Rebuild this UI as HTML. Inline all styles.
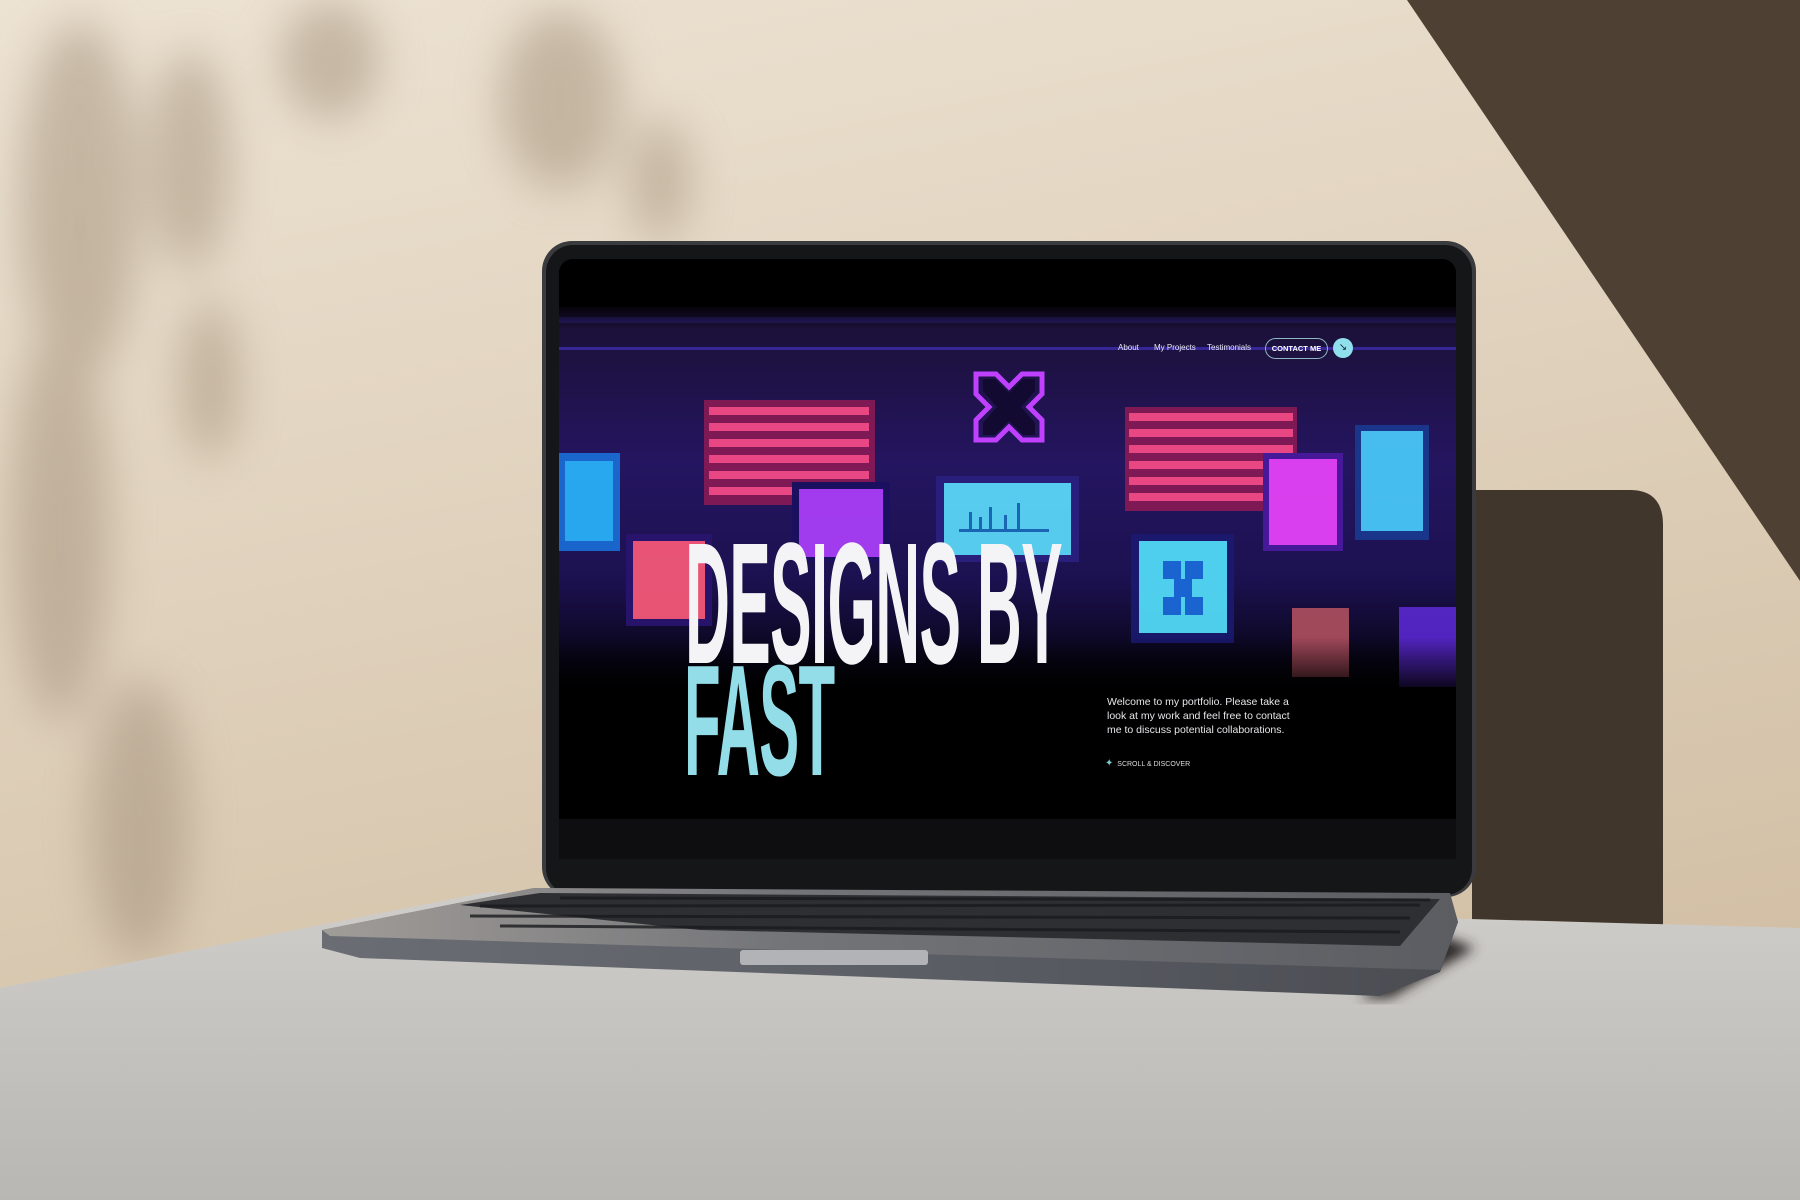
<!DOCTYPE html>
<html><head><meta charset="utf-8"><style>
*{margin:0;padding:0;box-sizing:border-box}
body{width:1800px;height:1200px;overflow:hidden;position:relative;background:#e4d6c2;font-family:"Liberation Sans",sans-serif}
.abs{position:absolute}
.scr{position:absolute;left:559px;top:259px;width:897px;height:600px;background:#000;border-radius:14px 14px 0 0;overflow:hidden}
.nav{position:absolute;top:84px;font-size:8px;color:#e8e8f0}
.big{position:absolute;font-weight:bold;line-height:1;transform-origin:0 0;white-space:nowrap;letter-spacing:-2px}
</style></head><body>
<svg class="abs" style="left:0;top:0" width="1800" height="1200">
<defs>
<linearGradient id="wall" x1="0" y1="0" x2="0.3" y2="1"><stop offset="0" stop-color="#ede3d3"/><stop offset="1" stop-color="#d2bfa5"/></linearGradient>
<linearGradient id="tab" x1="0" y1="0" x2="0" y2="1"><stop offset="0" stop-color="#cfcdc9"/><stop offset="1" stop-color="#b9b7b3"/></linearGradient>
<linearGradient id="front" x1="0" y1="0" x2="1" y2="0"><stop offset="0" stop-color="#6a6d74"/><stop offset="0.5" stop-color="#5c5f66"/><stop offset="1" stop-color="#4a4c52"/></linearGradient>
<linearGradient id="top" x1="0" y1="0" x2="1" y2="0"><stop offset="0" stop-color="#a09c98"/><stop offset="0.4" stop-color="#747579"/><stop offset="1" stop-color="#5b5d62"/></linearGradient>
<filter id="bl"><feGaussianBlur stdDeviation="22"/></filter>
<filter id="bl2"><feGaussianBlur stdDeviation="6"/></filter>
</defs>
<rect width="1800" height="1200" fill="url(#wall)"/>
<g filter="url(#bl)" fill="#a08e78" opacity="0.5">
<ellipse cx="80" cy="200" rx="60" ry="180"/><ellipse cx="190" cy="160" rx="40" ry="110"/><ellipse cx="60" cy="520" rx="50" ry="200"/><ellipse cx="140" cy="820" rx="50" ry="140"/><ellipse cx="560" cy="100" rx="60" ry="90"/><ellipse cx="330" cy="60" rx="50" ry="60"/><ellipse cx="210" cy="380" rx="30" ry="80"/><ellipse cx="660" cy="180" rx="30" ry="60"/>
</g>
<polygon points="1407,0 1800,0 1800,581" fill="#4e4033"/>
<path d="M1472,490 L1630,490 Q1663,490 1663,525 L1663,933 L1472,933 Z" fill="#41362b"/>
<polygon points="0,988 488,892 1800,928 1800,1200 0,1200" fill="url(#tab)"/>
<polygon points="1440,935 1475,948 1390,998 1360,998" fill="#2e2c2b" filter="url(#bl2)"/>
<!-- lid -->
<rect x="542" y="241" width="934" height="656" rx="30" fill="#3a3b3f"/>
<rect x="546" y="245" width="926" height="650" rx="27" fill="#151617"/>
<!-- base -->
<polygon points="322,930 534,888 1450,895 1458,922 1440,972 1380,996 360,958 322,948" fill="url(#front)"/>
<polygon points="322,930 534,888 1450,893 1458,922 1440,970 330,936" fill="url(#top)"/>
<polygon points="460,905 540,893 1440,899 1400,946 700,930" fill="#2e2f33"/>
<g stroke="#1a1b1e" stroke-width="3" opacity="0.8">
<line x1="480" y1="906" x2="1420" y2="905"/><line x1="470" y1="916" x2="1410" y2="918"/><line x1="500" y1="926" x2="1400" y2="932"/><line x1="560" y1="898" x2="1430" y2="900"/>
</g>
<rect x="740" y="950" width="188" height="15" rx="3" fill="#b2b3b7"/>
</svg>
<div class="scr">
  <div class="abs" style="left:386px;top:0;width:108px;height:25px;background:#000;border-radius:0 0 8px 8px"></div>
  <div class="abs" style="left:438px;top:8px;width:5px;height:5px;border-radius:50%;background:#223"></div>
  <div class="abs" style="left:0;top:48px;width:897px;height:390px;background:linear-gradient(#1a1033,#241560 40%,#1c1150 70%,#000 100%)"></div>
  <svg class="abs" style="left:0;top:48px" width="897" height="390">
    <defs><linearGradient id="fade" x1="0" y1="0" x2="0" y2="1"><stop offset="0" stop-color="#000" stop-opacity="0"/><stop offset="1" stop-color="#000"/></linearGradient></defs>
    <g opacity="0.9">
    <rect x="0" y="10" width="897" height="6" fill="#2c1f6e"/>
    <rect x="0" y="40" width="897" height="3" fill="#3a2aa0"/>
    <rect x="-2" y="146" width="63" height="98" fill="#1a6fd8"/><rect x="6" y="154" width="48" height="80" fill="#29b8ff"/>
    <rect x="145" y="93" width="171" height="105" fill="#8a1a55"/>
    <g fill="#ff4d88"><rect x="150" y="100" width="160" height="8"/><rect x="150" y="116" width="160" height="8"/><rect x="150" y="132" width="160" height="8"/><rect x="150" y="148" width="160" height="8"/><rect x="150" y="164" width="160" height="8"/><rect x="150" y="180" width="160" height="8"/></g>
    <rect x="566" y="100" width="172" height="104" fill="#8a1a55"/>
    <g fill="#ff4d88"><rect x="570" y="106" width="164" height="8"/><rect x="570" y="122" width="164" height="8"/><rect x="570" y="138" width="164" height="8"/><rect x="570" y="154" width="164" height="8"/><rect x="570" y="170" width="164" height="8"/><rect x="570" y="186" width="164" height="8"/></g>
    <rect x="67" y="227" width="86" height="92" fill="#2a1470"/><rect x="74" y="234" width="72" height="78" fill="#ff5c7a"/>
    <rect x="233" y="175" width="98" height="80" fill="#1a1060"/><rect x="240" y="182" width="84" height="68" fill="#b040ff"/>
    <rect x="377" y="169" width="143" height="86" fill="#2a2080"/><rect x="385" y="176" width="127" height="72" fill="#5de0ff"/>
    <g fill="#1a70c0"><rect x="400" y="222" width="90" height="3"/><rect x="410" y="205" width="3" height="17"/><rect x="420" y="210" width="3" height="12"/><rect x="430" y="200" width="3" height="22"/><rect x="445" y="208" width="3" height="14"/><rect x="458" y="196" width="3" height="26"/></g>
    <rect x="704" y="146" width="80" height="98" fill="#4a1aa0"/><rect x="710" y="152" width="68" height="86" fill="#ee44ff"/>
    <rect x="796" y="118" width="74" height="115" fill="#1a3a90"/><rect x="802" y="124" width="62" height="100" fill="#4ad0ff"/>
    <rect x="572" y="227" width="103" height="109" fill="#1a1a70"/><rect x="580" y="234" width="88" height="92" fill="#55e4ff"/>
    <g fill="#1a6ee0"><rect x="604" y="254" width="18" height="18"/><rect x="626" y="254" width="18" height="18"/><rect x="615" y="272" width="18" height="18"/><rect x="604" y="290" width="18" height="18"/><rect x="626" y="290" width="18" height="18"/></g>
    <rect x="733" y="301" width="57" height="69" fill="#b05060"/>
    <rect x="840" y="300" width="57" height="80" fill="#5a28d0"/>
    </g>
    <g fill="none" stroke="#c040ff" stroke-width="5"><path d="M417 67 L437 67 L450 80 L463 67 L483 67 L483 87 L470 100 L483 113 L483 133 L463 133 L450 120 L437 133 L417 133 L417 113 L430 100 L417 87 Z"/></g>
    <path d="M424 72 L436 72 L450 86 L464 72 L476 72 L476 84 L462 100 L476 116 L476 128 L464 128 L450 114 L436 128 L424 128 L424 116 L438 100 L424 84 Z" fill="#120a30"/>
    <rect x="0" y="330" width="897" height="60" fill="url(#fade)"/>
  </svg>
  <div class="abs" style="left:0;top:0;width:897px;height:70px;background:linear-gradient(#000 60%,rgba(0,0,0,0))"></div>
  <div class="nav" style="left:559px">About</div>
  <div class="nav" style="left:595px">My Projects</div>
  <div class="nav" style="left:648px">Testimonials</div>
  <div class="abs" style="left:706px;top:79px;width:63px;height:21px;border:1px solid #8fb8c0;border-radius:11px;font-size:7.5px;font-weight:bold;color:#fff;text-align:center;line-height:19px">CONTACT ME</div>
  <div class="abs" style="left:774px;top:79px;width:20px;height:20px;border-radius:50%;background:#8fe0ec;color:#123;font-size:10px;text-align:center;line-height:20px">&#8600;</div>
  <div class="big" style="left:126px;top:258px;font-size:173px;color:#f4f4f6;transform:scaleX(0.36)">DESIGNS BY</div>
  <div class="big" style="left:125px;top:383px;font-size:158px;color:#93dde8;transform:scaleX(0.38)">FAST</div>
  <div class="abs" style="left:548px;top:436px;width:200px;font-size:10.5px;line-height:14px;color:#e6e6ea">Welcome to my portfolio. Please take a look at my work and feel free to contact me to discuss potential collaborations.</div>
  <div class="abs" style="left:546px;top:499px;font-size:7px;color:#ddd"><span style="color:#7cc;font-size:10px">&#10022;</span>&nbsp; SCROLL &amp; DISCOVER</div>
  <div class="abs" style="left:0;top:560px;width:897px;height:40px;background:#0e0e10"></div>
</div>
</body></html>
